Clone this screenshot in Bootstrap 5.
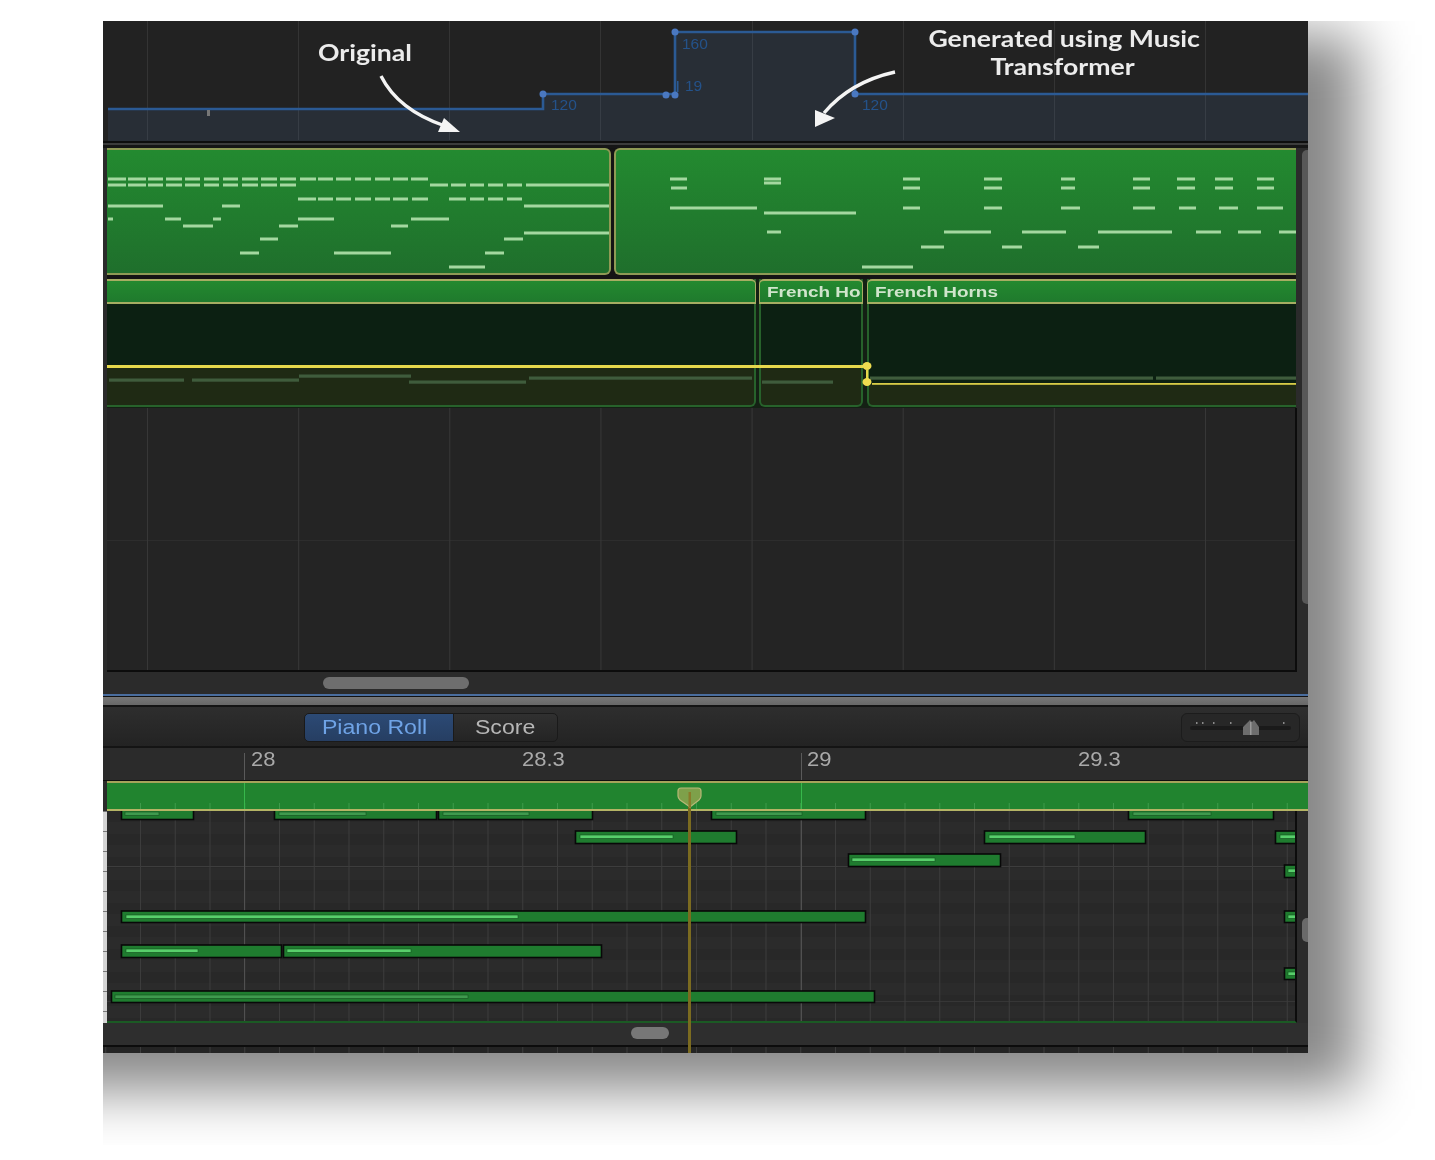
<!DOCTYPE html>
<html lang="en">
<head>
    <meta charset="UTF-8">
    <title>Piano Roll</title>
    <link href="https://cdn.jsdelivr.net/npm/bootstrap@5.3.2/dist/css/bootstrap.min.css" rel="stylesheet">
    <style>
        body { background: #fff; margin: 0; font-family: "Liberation Sans", Arial, sans-serif; }
        .shot { margin: 21px 0 0 103px; width: 1332px; height: 1124px; overflow: hidden; position: relative; }
        .shadow-cast { position: absolute; left: -100px; top: 14px; width: 1355px; height: 1055px; background: rgba(0, 0, 0, .47); filter: blur(28px); }
        .daw { width: 1205px; height: 1032px; background: #2b2b2b; position: relative; }
        .daw-inner { height: 100%; filter: blur(.55px); position: relative; }
        .daw svg { display: block; }
        /* the screenshot is stretched sideways, so is its text */
        .wide { display: inline-block; transform-origin: left center; }

        .tempo { height: 120px; background: #222; position: relative; }
        .note-label { position: absolute; color: #ececec; font-family: Lato, sans-serif; font-weight: 700; font-size: 22px; line-height: 28px; text-align: center; white-space: nowrap; }
        .note-label .wide { transform: scaleX(1.21); }
        .label-orig { left: 215px; top: 18px; }
        .label-gen { left: 849px; top: 4px; width: 222px; }
        .label-gen .wide { transform-origin: center; }
        .sep { height: 7px; background: linear-gradient(#0e0e0e 0 2px, #3c3c3c 2px 4px, #161616 4px); }

        .lane { margin: 0 12px 0 4px; }
        .midi-row { height: 127px; background: #141414; }
        .region { height: 127px; background: linear-gradient(#238a30, #1f6f2c); border: 2px solid #8f9a55; border-left-width: 0; border-radius: 0 6px 6px 0; }
        .region-a { width: 504px; }
        .region-b { width: 682px; margin-left: 3px; border-left-width: 2px; border-radius: 6px 0 0 6px; border-right: 0; }
        .gap-line { height: 4px; background: #141414; margin: 0 12px 0 4px; }

        .audio-row { height: 129px; position: relative; background: #142014; }
        .clip { height: 128px; border-right: 2px solid #27622b; border-bottom: 2px solid #27622b; border-radius: 0 0 6px 0; background: linear-gradient(#0c2012 0 87px, #1f2a14 87px); }
        .clip-a { width: 649px; }
        .clip-b { width: 104px; margin-left: 3px; border-left: 2px solid #27622b; border-radius: 0 0 6px 6px; }
        .clip-c { width: 429px; margin-left: 4px; border-left: 2px solid #27622b; border-right: 0; border-radius: 0 0 0 6px; background: linear-gradient(#0c2012 0 105px, #1f2a14 105px); }
        .clip-head { height: 25px; background: linear-gradient(#23892f, #1f7a2d); border-top: 2px solid #a6ad62; border-bottom: 2px solid #a6ad62; color: #d0e5cc; font-weight: 700; font-size: 15.5px; line-height: 22px; white-space: nowrap; overflow: hidden; }
        .clip-head .wide { transform: scaleX(1.22); }
        .clip-a .clip-head { border-right: 1px solid #a6ad62; border-radius: 0 5px 0 0; margin-right: -2px; }
        .clip-b .clip-head { margin: 0 -2px; padding-left: 7px; border-left: 1px solid #a6ad62; border-right: 1px solid #a6ad62; border-radius: 5px 5px 0 0; }
        .clip-c .clip-head { margin-left: -2px; padding-left: 7px; border-left: 1px solid #a6ad62; border-radius: 5px 0 0 0; }
        .audio-draw { position: absolute; left: 0; top: 0; }

        .arrange { height: 264px; position: relative; margin-right: 11px; border-right: 2px solid #0c0c0c; border-bottom: 2px solid #0c0c0c;
            background-color: #242424;
            background-image: linear-gradient(90deg, #373737 1px, transparent 1px), linear-gradient(#2d2d2d 1px, transparent 1px);
            background-size: 151.15px 100%, 100% 100%;
            background-position: 40px 0, 0 132px;
            background-repeat: repeat-x, no-repeat; }
        .hscroll { height: 22px; position: relative; }
        .thumb { position: absolute; background: #6e6e6e; border-radius: 7px; }
        .thumb-top { left: 216px; top: 5px; width: 146px; height: 12px; }
        .thumb-low { left: 528px; top: 4px; width: 38px; height: 12px; background: #777; }
        .vthumb { position: absolute; background: #585858; border-radius: 5px 0 0 5px; right: 0; width: 6px; }
        .vthumb-top { top: 129px; height: 454px; }
        .vthumb-low { top: 897px; height: 24px; background: #6a6a6a; }

        .blue-edge { height: 3px; background: linear-gradient(#4a6d9e 0 2px, #111 2px); }
        .gray-band { height: 10px; background: linear-gradient(#777, #686868 80%, #141414 80%); }
        .tools { height: 41px; background: linear-gradient(#2e2e2e, #232323); border-bottom: 2px solid #141414; position: relative; padding: 6px 8px 0 201px; }
        .seg { height: 29px; }
        .seg .btn { font-size: 20px; line-height: 23px; padding: 0; border: 1px solid #1a1a1a; border-radius: 5px; box-shadow: none; }
        .seg .wide { transform: scaleX(1.154); transform-origin: center; }
        .seg-on { width: 150px; background: linear-gradient(#2c4a75, #263e62); color: #6fa3e6; padding-right: 8px !important; }
        .seg-off { width: 105px; background: linear-gradient(#303030, #242424); color: #b6b6b6; }
        .seg .seg-on:hover { background: #2c4a75; color: #6fa3e6; }
        .seg .seg-off:hover { background: #303030; color: #b6b6b6; }
        .zoombox { width: 119px; height: 29px; border: 1px solid #1c1c1c; border-radius: 6px; background: #272727; position: relative; }

        .ruler { height: 33px; background: #2b2b2b; position: relative; color: #a9a9a9; font-size: 20px; border-bottom: 1px solid #0e0e0e; }
        .ruler-mark { position: absolute; top: 1px; line-height: 20px; }
        .ruler-mark .wide { transform: scaleX(1.1); }
        .ruler-line { position: absolute; top: 5px; bottom: 0; width: 1px; background: #5a5a5a; }
        .strip { height: 30px; margin-left: 4px; background: #21842f; border-top: 2px solid #a6a35a; border-bottom: 2px solid #b5b465; position: relative; }
        .strip-draw { position: absolute; left: 0; top: -2px; }

        .roll-wrap { height: 212px; position: relative; }
        .keys { width: 4px; background-color: #d4d4d4; background-image: linear-gradient(#777 1px, transparent 1px); background-size: 100% 20px; }
        .roll { width: 1190px; height: 212px; position: relative; border-right: 2px solid #0c0c0c; border-bottom: 2px solid #1b5a24;
            background-color: #292929;
            background-image: linear-gradient(90deg, #505050 1px, transparent 1px), linear-gradient(90deg, #3c3c3c 1px, transparent 1px),
                linear-gradient(#3d3d3d 1px, transparent 1px), linear-gradient(#363636 1px, transparent 1px), repeating-linear-gradient(#282828 0 11px, #2b2b2b 11px 23px);
            background-size: 557px 100%, 34.75px 100%, 100% 100%, 100% 100%, 100% 100%;
            background-position: 137px 0, 33px 0, 0 55px, 0 190px, 0 0;
            background-repeat: repeat-x, repeat-x, no-repeat, no-repeat, no-repeat; }
        .tail { height: 8px; border-top: 2px solid #0c0c0c;
            background-color: #242424;
            background-image: linear-gradient(90deg, #3c3c3c 1px, transparent 1px);
            background-size: 34.75px 100%; background-position: 37px 0; }
        .low-scroll { height: 22px; position: relative; background: #2e2e2e; }
        .playhead { position: absolute; left: 585px; top: 770px; width: 3px; height: 262px; background: #7b6b20; }
    </style>
</head>
<body>
    <div class="shot">
        <div class="shadow-cast"></div>
        <div class="daw">
            <div class="daw-inner d-flex flex-column">
                <!-- tempo lane -->
                <div class="tempo">
                    <svg id="tempo-draw" width="1205" height="120" viewBox="103 21 1205 120"></svg>
                    <div class="note-label label-orig"><span class="wide">Original</span></div>
                    <div class="note-label label-gen"><span class="wide">Generated using Music</span><br><span class="wide">Transformer</span></div>
                </div>
                <div class="sep"></div>

                <!-- midi regions -->
                <div class="lane midi-row d-flex">
                    <div class="region region-a"><svg id="midi-a" width="502" height="123" viewBox="107 150 502 123"></svg></div>
                    <div class="region region-b"><svg id="midi-b" width="680" height="123" viewBox="616 150 680 123"></svg></div>
                </div>
                <div class="gap-line"></div>

                <!-- automation row -->
                <div class="lane audio-row d-flex">
                    <div class="clip clip-a"><div class="clip-head"></div></div>
                    <div class="clip clip-b"><div class="clip-head"><span class="wide">French Ho</span></div></div>
                    <div class="clip clip-c"><div class="clip-head"><span class="wide">French Horns</span></div></div>
                    <svg class="audio-draw" id="audio-draw" width="1189" height="129" viewBox="107 279 1189 129"></svg>
                </div>

                <div class="lane arrange"></div>
                <div class="lane hscroll"><div class="thumb thumb-top"></div></div>
                <div class="blue-edge"></div>
                <div class="gray-band"></div>

                <!-- editor toolbar -->
                <div class="tools d-flex justify-content-between">
                    <div class="btn-group seg" role="group">
                        <button type="button" class="btn seg-on"><span class="wide">Piano Roll</span></button>
                        <button type="button" class="btn seg-off"><span class="wide">Score</span></button>
                    </div>
                    <div class="zoombox">
                        <svg width="117" height="27" viewBox="1182 714 117 27">
                            <rect x="1190" y="726" width="101" height="4" rx="2" fill="#1a1a1a"/>
                            <g fill="#8a8a8a">
                                <rect x="1196" y="722" width="1.5" height="2"/><rect x="1202" y="722" width="1.5" height="2"/>
                                <rect x="1213" y="722" width="1.5" height="2"/><rect x="1230" y="722" width="1.5" height="2"/>
                                <rect x="1283" y="722" width="1.5" height="2"/>
                            </g>
                            <path d="M1243 735V727L1250 720L1252 722L1254 720L1259 727V735Z" fill="#6d6d6d"/>
                            <rect x="1250" y="722" width="1.5" height="13" fill="#9a9a9a"/>
                        </svg>
                    </div>
                </div>

                <div class="ruler">
                    <div class="ruler-line" style="left:141px"></div><div class="ruler-mark" style="left:148px"><span class="wide">28</span></div>
                    <div class="ruler-mark" style="left:419px"><span class="wide">28.3</span></div>
                    <div class="ruler-line" style="left:698px"></div><div class="ruler-mark" style="left:704px"><span class="wide">29</span></div>
                    <div class="ruler-mark" style="left:975px"><span class="wide">29.3</span></div>
                </div>
                <div class="strip"><svg class="strip-draw" id="strip-draw" width="1201" height="30" viewBox="107 781 1201 30"></svg></div>

                <div class="roll-wrap d-flex">
                    <div class="keys"></div>
                    <div class="roll"><svg id="roll-draw" width="1188" height="210" viewBox="107 811 1188 210"></svg></div>
                </div>
                <div class="low-scroll"><div class="thumb thumb-low"></div></div>
                <div class="tail"></div>

                <div class="vthumb vthumb-top"></div>
                <div class="vthumb vthumb-low"></div>
                <div class="playhead"></div>
                <svg style="position:absolute;left:0;top:0" width="1205" height="300" viewBox="103 21 1205 300" id="arrows"></svg>
                <svg style="position:absolute;left:570px;top:764px" width="32" height="26" viewBox="673 785 32 26">
                    <path d="M678 791Q678 788 681 788H698Q701 788 701 791V796Q701 798 699 800L690 807L680 800Q678 798 678 796Z" fill="#7ea04a" stroke="#b8b878" stroke-width="1.2"/>
                    <rect x="688.5" y="792" width="2.5" height="15" fill="#8a7a2a"/>
                </svg>
            </div>
        </div>
    </div>

    <script>
        const NS = "http://www.w3.org/2000/svg";
        const add = (svg, name, attrs, text) => {
            const el = document.createElementNS(NS, name);
            Object.keys(attrs).forEach(k => el.setAttribute(k, attrs[k]));
            if (text) el.textContent = text;
            document.getElementById(svg).appendChild(el);
        };

        // tempo lane
        [147, 298, 449, 600, 752, 903, 1054, 1205].forEach(x => add("tempo-draw", "rect", { x, y: 21, width: 1, height: 119, fill: "#343434" }));
        add("tempo-draw", "path", { d: "M108 109H543V94H675V32H855V94H1308V141H108Z", fill: "#4a6c9a", "fill-opacity": ".17" });
        add("tempo-draw", "path", { d: "M108 109H543V94H675V32H855V94H1308", fill: "none", stroke: "#2b5a94", "stroke-width": 2.6 });
        add("tempo-draw", "rect", { x: 677, y: 81, width: 1.5, height: 11, fill: "#2b5a94" });
        add("tempo-draw", "rect", { x: 207, y: 110, width: 3, height: 6, fill: "#777" });
        [[543, 94], [666, 95], [675, 95], [675, 32], [855, 32], [855, 94]].forEach(p => add("tempo-draw", "circle", { cx: p[0], cy: p[1], r: 3.5, fill: "#4a78c0" }));
        [["120", 551, 110], ["160", 682, 49], ["19", 685, 91], ["120", 862, 110]].forEach(t =>
            add("tempo-draw", "text", { x: t[1], y: t[2], fill: "#24528a", "font-size": 15.5, "font-family": "Liberation Sans, sans-serif" }, t[0]));

        // the two white callout arrows
        add("arrows", "path", { d: "M381 76Q398 110 445 126", fill: "none", stroke: "#f4f4f4", "stroke-width": 3.4 });
        add("arrows", "path", { d: "M444 118L460 132L438 132Z", fill: "#f4f4f4" });
        add("arrows", "path", { d: "M895 72Q850 82 824 113", fill: "none", stroke: "#f4f4f4", "stroke-width": 3.4 });
        add("arrows", "path", { d: "M815 110L835 118L815 127Z", fill: "#f4f4f4" });

        // midi dashes: y, then [x1, x2] pairs
        const midiA = [
            [179, [[108,126],[128,146],[148,163],[166,182],[185,200],[204,219],[223,238],[242,258],[261,277],[280,296],[300,316],[318,333],[336,351],[355,371],[375,390],[393,408],[411,428]]],
            [185, [[108,126],[128,146],[148,163],[166,182],[185,200],[204,219],[223,238],[242,258],[261,277],[280,296],[430,448],[451,466],[470,484],[488,503],[507,522],[526,611]]],
            [199, [[298,316],[318,333],[336,351],[355,371],[375,390],[393,408],[412,428],[449,466],[470,484],[488,503],[507,522]]],
            [206, [[108,163],[222,240],[524,611]]],
            [219, [[108,113],[165,181],[213,221],[298,334],[411,449]]],
            [226, [[183,213],[279,298],[391,408]]],
            [233, [[524,611]]],
            [239, [[260,278],[504,523]]],
            [253, [[240,259],[334,391],[485,504]]],
            [267, [[449,485]]]
        ];
        const midiB = [
            [179, [[670,687],[764,781],[903,920],[984,1002],[1061,1075],[1133,1150],[1177,1195],[1215,1233],[1257,1274]]],
            [183, [[764,781]]],
            [188, [[671,687],[903,920],[984,1002],[1061,1075],[1133,1150],[1177,1195],[1215,1233],[1257,1274]]],
            [208, [[670,757],[903,920],[984,1002],[1061,1080],[1133,1155],[1179,1196],[1219,1238],[1257,1283]]],
            [213, [[764,856]]],
            [232, [[767,781],[944,991],[1022,1066],[1098,1172],[1196,1221],[1238,1261],[1279,1296]]],
            [247, [[921,944],[1002,1022],[1078,1099]]],
            [267, [[862,913]]]
        ];
        const drawMidi = (svg, rows) => rows.forEach(r => r[1].forEach(n =>
            add(svg, "rect", { x: n[0], y: r[0] - 1.5, width: n[1] - n[0], height: 3, fill: "#a4d8a0" })));
        drawMidi("midi-a", midiA);
        drawMidi("midi-b", midiB);

        // automation lines and faded notes
        [[109,184,380],[192,299,380],[299,411,376],[409,526,382],[529,752,378],[762,833,382],[870,1153,378],[1156,1296,378]].forEach(n =>
            add("audio-draw", "rect", { x: n[0], y: n[2] - 1.5, width: n[1] - n[0], height: 3.2, fill: "#3f5c3c" }));
        add("audio-draw", "rect", { x: 107, y: 365, width: 756, height: 3, fill: "#e6d84c" });
        add("audio-draw", "rect", { x: 872, y: 383, width: 424, height: 1.8, fill: "#d8cc48" });
        add("audio-draw", "rect", { x: 866, y: 370, width: 2.4, height: 9, fill: "#e6d84c" });
        [366, 382].forEach(y => add("audio-draw", "ellipse", { cx: 867, cy: y, rx: 4.5, ry: 4, fill: "#efdc50" }));

        // ticks on the green strip of the editor
        for (let x = 140; x < 1308; x += 34.75) add("strip-draw", "rect", { x, y: 803, width: 1, height: 6, fill: "#3f9a4b" });
        [244, 801].forEach(x => add("strip-draw", "rect", { x, y: 783, width: 1, height: 26, fill: "#37b84c" }));

        // piano roll notes: x1, x2, y1, y2, highlight x1, x2
        const notes = [
            [121,193,808,819,125,159], [274,436,808,819,279,366], [438,592,808,819,443,529], [711,865,808,819,716,802], [1128,1273,808,819,1133,1211],
            [575,736,831,843,580,673], [984,1145,831,843,989,1075], [1275,1298,831,843,1280,1296],
            [848,1000,854,866,852,935],
            [1284,1298,865,877,1288,1296], [1284,1298,911,922,1288,1296], [1284,1298,968,979,1288,1296],
            [121,865,911,922,126,518],
            [121,281,945,957,126,198], [283,601,945,957,287,411],
            [111,874,991,1002,115,468]
        ];
        notes.forEach(n => {
            const top = Math.max(n[2], 810);
            add("roll-draw", "rect", { x: n[0] + .5, y: top, width: n[1] - n[0], height: n[3] - top + .5, fill: "#1f7c2f", stroke: "#080808", "stroke-width": 1.6 });
            const dull = n[0] === 111 || n[2] < 811;
            add("roll-draw", "rect", { x: n[4], y: n[2] + 4, width: n[5] - n[4], height: 3.4, fill: dull ? "#3f9a4e" : "#58cf6b", stroke: "#14501f", "stroke-width": .6 });
        });
    </script>
    <script src="https://cdn.jsdelivr.net/npm/bootstrap@5.3.2/dist/js/bootstrap.bundle.min.js"></script>
</body>
</html>
